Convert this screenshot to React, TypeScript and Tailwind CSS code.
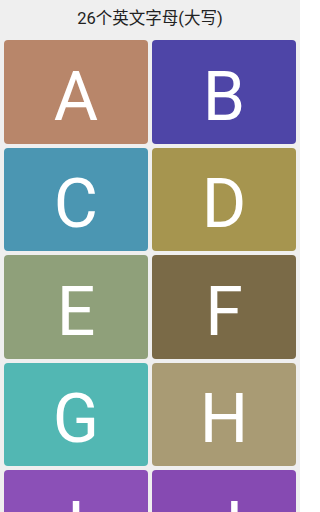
const letters = [
  { ch: "A", color: "bg-[#b8866a]" },
  { ch: "B", color: "bg-[#4e45a7]" },
  { ch: "C", color: "bg-[#4b96b2]" },
  { ch: "D", color: "bg-[#a6954f]" },
  { ch: "E", color: "bg-[#8fa07a]" },
  { ch: "F", color: "bg-[#7a6a47]" },
  { ch: "G", color: "bg-[#52b7b3]" },
  { ch: "H", color: "bg-[#a99b74]" },
  { ch: "I", color: "bg-[#8b50b7]" },
  { ch: "J", color: "bg-[#864ab2]" },
];

export default function App() {
  return (
    <div className="h-[512px] w-[300px] overflow-hidden bg-[#efefef] font-['Roboto','Noto_Sans_CJK_SC',sans-serif]">
      <div className="flex h-[38px] items-center justify-center pt-[1px] text-[16.5px] text-[#222]">
        26个英文字母(大写)
      </div>
      <div className="grid grid-cols-2 gap-1 px-1 pt-[2px]">
        {letters.map((l) => (
          <div
            key={l.ch}
            className={`flex h-[103.5px] items-center justify-center rounded-[4px] pt-[10px] text-[68px] leading-none text-white ${l.color}`}
          >
            {l.ch}
          </div>
        ))}
      </div>
    </div>
  );
}
